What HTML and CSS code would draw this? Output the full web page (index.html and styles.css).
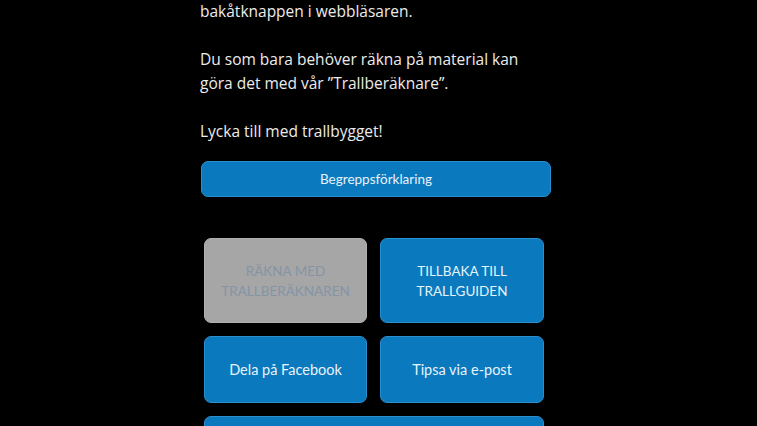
FILE: index.html
```html
<!DOCTYPE html>
<html lang="sv">
<head>
<meta charset="utf-8">
<link rel="stylesheet" href="styles.css">
</head>
<body>
<main class="page">
  <div class="text">
    <p>bakåtknappen i webbläsaren.</p>
    <p>Du som bara behöver räkna på material kan göra det med vår ”Trallberäknare”.</p>
    <p>Lycka till med trallbygget!</p>
  </div>
  <a class="btn wide">Begreppsförklaring</a>
  <div class="grid">
    <a class="btn tall disabled">RÄKNA MED<br>TRALLBERÄKNAREN</a>
    <a class="btn tall">TILLBAKA TILL<br>TRALLGUIDEN</a>
    <a class="btn mid">Dela på Facebook</a>
    <a class="btn mid">Tipsa via e-post</a>
    <a class="btn mid full">&nbsp;</a>
  </div>
</main>
</body>
</html>
```

FILE: styles.css
```css
html, body {
  margin: 0;
  padding: 0;
  background: #000;
  height: 100%;
  overflow: hidden;
}
.page {
  width: 351px;
  margin-left: 200px;
}
.text {
  font-family: "Open Sans", sans-serif;
  font-size: 15.5px;
  line-height: 24px;
  color: #ececec;
  margin-top: -1px;
}
.text p {
  margin: 0 0 24px 0;
}
.text p:last-child {
  margin-bottom: 18px;
}
.btn {
  display: flex;
  align-items: center;
  justify-content: center;
  text-align: center;
  box-sizing: border-box;
  background: #0b79bd;
  border: 1px solid #2a8fcc;
  border-radius: 7px;
  color: #e6f3fc;
  font-family: Lato, "Open Sans", sans-serif;
  font-size: 14.5px;
  line-height: 20px;
  text-decoration: none;
}
.wide {
  margin-left: 1px;
  width: 350px;
  height: 36px;
  font-size: 13.5px;
}
.grid {
  display: grid;
  grid-template-columns: 163px 164px;
  column-gap: 13px;
  row-gap: 13px;
  margin-top: 41px;
  margin-left: 4px;
}
.tall {
  height: 85px;
  font-size: 13.5px;
}
.mid {
  height: 67px;
}
.full {
  grid-column: 1 / 3;
}
.disabled {
  background: #a6a6a6;
  border-color: #b0b0b0;
  color: #8494a6;
}
```
